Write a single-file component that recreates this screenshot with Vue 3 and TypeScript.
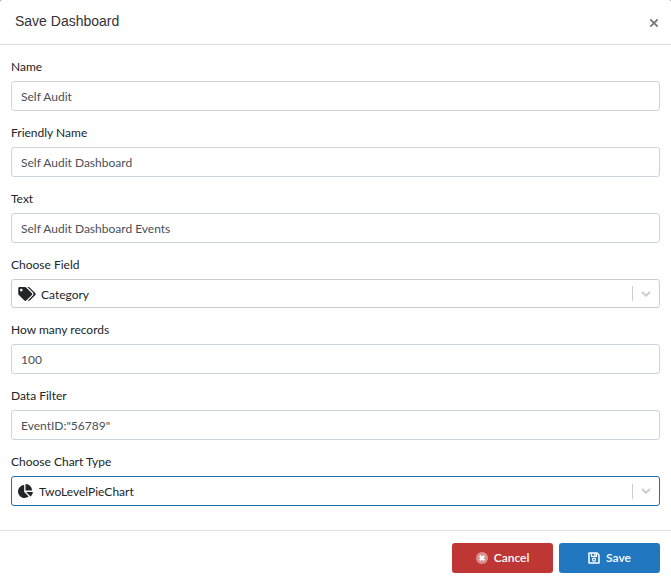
<script setup lang="ts">
import { reactive, ref } from 'vue'

interface TextField {
  id: 'name' | 'friendlyName' | 'text' | 'records' | 'filter'
  label: string
}

const topFields: TextField[] = [
  { id: 'name', label: 'Name' },
  { id: 'friendlyName', label: 'Friendly Name' },
  { id: 'text', label: 'Text' },
]

const limitFields: TextField[] = [
  { id: 'records', label: 'How many records' },
  { id: 'filter', label: 'Data Filter' },
]

const form = reactive<Record<TextField['id'], string>>({
  name: 'Self Audit',
  friendlyName: 'Self Audit Dashboard',
  text: 'Self Audit Dashboard Events',
  records: '100',
  filter: 'EventID:"56789"',
})

const field = ref('Category')
const chartType = ref('TwoLevelPieChart')
</script>

<template>
  <form class="dialog" role="dialog" aria-labelledby="dialog-title" @submit.prevent>
    <header class="header">
      <h1 id="dialog-title" class="title">Save Dashboard</h1>
      <button type="button" class="close" aria-label="Close">
        <svg viewBox="0 0 10 10" width="10" height="10">
          <path d="M1.3 1.3 8.7 8.7M8.7 1.3 1.3 8.7" stroke="currentColor" stroke-width="1.8" />
        </svg>
      </button>
    </header>

    <main class="body">
      <div v-for="item in topFields" :key="item.id" class="group">
        <label :for="item.id">{{ item.label }}</label>
        <input :id="item.id" v-model="form[item.id]" class="control" type="text" />
      </div>

      <div class="group">
        <label for="field">Choose Field</label>
        <div class="picker">
          <svg class="glyph" viewBox="0 0 640 512" width="18" height="14" aria-hidden="true">
            <path fill="currentColor" d="M497.941 225.941L286.059 14.059A48 48 0 0 0 252.118 0H48C21.49 0 0 21.49 0 48v204.118a48 48 0 0 0 14.059 33.941l211.882 211.882c18.744 18.745 49.136 18.746 67.882 0l204.118-204.118c18.745-18.745 18.745-49.137 0-67.882zM112 160c-26.51 0-48-21.49-48-48s21.49-48 48-48 48 21.49 48 48-21.49 48-48 48zm513.941 133.823L421.823 497.941c-18.745 18.745-49.137 18.745-67.882 0l-.36-.36L527.64 323.522c16.999-16.999 26.36-39.6 26.36-63.64s-9.362-46.641-26.36-63.64L331.397 0h48.721a48 48 0 0 1 33.941 14.059l211.882 211.882c18.745 18.745 18.745 49.137 0 67.882z" />
          </svg>
          <select id="field" v-model="field" class="control select short">
            <option>Category</option>
          </select>
          <span class="arrow" aria-hidden="true">
            <svg viewBox="0 0 10 6" width="10" height="6">
              <path d="M1 1 5 4.8 9 1" fill="none" stroke="currentColor" stroke-width="1.9" />
            </svg>
          </span>
        </div>
      </div>

      <div v-for="item in limitFields" :key="item.id" class="group">
        <label :for="item.id">{{ item.label }}</label>
        <input :id="item.id" v-model="form[item.id]" class="control" type="text" />
      </div>

      <div class="group">
        <label for="chart-type">Choose Chart Type</label>
        <div class="picker">
          <svg class="glyph" viewBox="0 0 544 512" width="15" height="14" aria-hidden="true">
            <path fill="currentColor" d="M527.79 288H290.5l158.03 158.03c6.04 6.04 15.98 6.53 22.19.68 38.7-36.46 65.32-85.61 73.13-140.86 1.34-9.46-6.51-17.85-16.06-17.85zm-15.83-64.8C503.72 103.74 408.26 8.28 288.8.04 279.68-.59 272 7.1 272 16.24V240h223.77c9.14 0 16.82-7.68 16.19-16.8zM224 288V50.71c0-9.55-8.39-17.4-17.84-16.06C86.99 51.49-4.1 155.6.14 280.37 4.5 408.51 114.83 513.59 243.03 511.98c50.4-.63 96.97-16.87 135.26-44.03 7.9-5.6 8.42-17.23 1.57-24.08L224 288z" />
          </svg>
          <select id="chart-type" v-model="chartType" class="control select active">
            <option>TwoLevelPieChart</option>
          </select>
          <span class="arrow" aria-hidden="true">
            <svg viewBox="0 0 10 6" width="10" height="6">
              <path d="M1 1 5 4.8 9 1" fill="none" stroke="currentColor" stroke-width="1.9" />
            </svg>
          </span>
        </div>
      </div>
    </main>

    <footer class="footer">
      <button type="button" class="button cancel">
        <svg viewBox="0 0 12 12" width="12" height="12" aria-hidden="true">
          <circle cx="6" cy="6" r="6" fill="#fff" opacity="0.45" />
          <path d="M3.8 3.8 8.2 8.2M8.2 3.8 3.8 8.2" stroke="#fff" stroke-width="2.2" />
        </svg>
        Cancel
      </button>
      <button type="submit" class="button save">
        <svg viewBox="0 0 12 12" width="12" height="12" fill="none" stroke="#fff" aria-hidden="true">
          <path d="M1 1H9L11 3V11H1Z" stroke-width="1.5" stroke-linejoin="round" />
          <path d="M3.5 1V4.3H8.5V1M6.8 1.5V3.8" stroke-width="1.2" />
          <circle cx="6" cy="7.7" r="1.5" stroke-width="1.2" />
        </svg>
        Save
      </button>
    </footer>
  </form>
</template>

<style>
body {
  background: #8c8c8c;
}
</style>

<style scoped>
.dialog {
  box-sizing: border-box;
  min-height: 100vh;
  border-radius: 2px 2px 0 0;
  background: #fff;
  color: #212529;
  font: 12px/18px Lato, "Open Sans", sans-serif;
}

.header {
  display: flex;
  justify-content: space-between;
  align-items: center;
  padding: 12px 12px 12px 15px;
  border-bottom: 1px solid #dee2e6;
}

.title {
  margin: 0;
  padding-bottom: 2px;
  font: 14px/18px "Liberation Sans", Arial, sans-serif;
  color: #333;
}

.close {
  display: flex;
  padding: 2px 0 0;
  border: 0;
  background: none;
  color: #777;
}

.body {
  display: flex;
  flex-direction: column;
  gap: 13px;
  padding: 13px 11px 24px;
}

.group {
  display: flex;
  flex-direction: column;
  gap: 5px;
}

.control {
  box-sizing: border-box;
  width: 100%;
  height: 30px;
  margin: 0;
  padding: 1px 9px 0;
  border: 1px solid #ced4da;
  border-radius: 3px;
  outline: 0;
  background: #fff;
  color: #495057;
  font: inherit;
}

.picker {
  display: flex;
  align-items: center;
  position: relative;
}

.select {
  appearance: none;
  padding: 2px 40px 0 27px;
  color: #212529;
}

.short {
  height: 29px;
  padding-left: 29px;
  border-color: #ccc;
}

.active {
  border-color: #1f70ad;
}

.glyph {
  position: absolute;
  left: 7px;
  pointer-events: none;
}

.arrow {
  position: absolute;
  right: 1px;
  display: flex;
  align-items: center;
  justify-content: center;
  width: 26px;
  height: 15px;
  border-left: 1px solid #ccc;
  color: #ccc;
  pointer-events: none;
}

.footer {
  display: flex;
  justify-content: flex-end;
  gap: 6px;
  padding: 12px 11px 11px;
  border-top: 1px solid #dee2e6;
}

.button {
  display: flex;
  align-items: center;
  justify-content: center;
  gap: 6px;
  width: 101px;
  height: 30px;
  padding: 0;
  border: 0;
  border-radius: 3px;
  color: #fff;
  font: inherit;
  font-weight: 600;
}

.cancel {
  background: #be3735;
}

.save {
  background: #2278c0;
}
</style>
